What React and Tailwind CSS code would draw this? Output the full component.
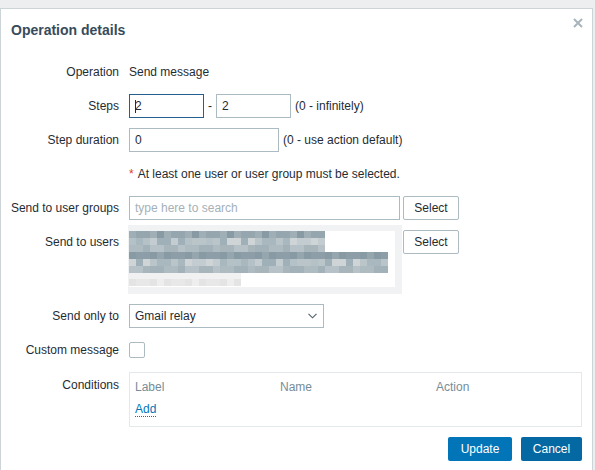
import React from "react";

const DARK = ["bg-[#8d9ea8]", "bg-[#96a6af]", "bg-[#889aa4]", "bg-[#a0aeb6]", "bg-[#92a2ab]"];
const MID = ["bg-[#b4c1c7]", "bg-[#c3ccd0]", "bg-[#a9b7be]", "bg-[#cfd5d6]", "bg-[#bac5ca]", "bg-[#9fb0b8]"];
const SOFT = ["bg-[#a8b6bc]", "bg-[#aebbc1]", "bg-[#b6c2c7]", "bg-[#a3b2b9]"];
const LIGHT = ["bg-[#eeeeee]", "bg-[#e4e4e4]", "bg-[#f3f3f3]", "bg-[#dcdbdb]", "bg-[#e8e8e8]"];

// blurred user list, drawn as a mosaic
const MosaicRow = ({ cells, palette, seed }) => (
  <div className="flex h-[7px]">
    {Array.from({ length: cells }).map((_, i) => (
      <div key={i} className={`w-[7px] h-[7px] ${palette[(i * 7 + seed * 3 + ((i * i) % 5)) % palette.length]}`} />
    ))}
  </div>
);

const Row = ({ label, children, className = "items-center h-6", inner = "items-center" }) => (
  <div className={`flex ${className}`}>
    <div className="w-[118px] shrink-0 text-right">{label}</div>
    <div className={`ml-[10px] flex ${inner}`}>{children}</div>
  </div>
);

const Box = ({ w, children, focused }) => (
  <div
    className={`h-6 flex items-center px-[5px] bg-white border ${
      focused ? "border-[#245f8f]" : "border-[#acbbc2]"
    } ${w}`}
  >
    {children}
  </div>
);

const SelectBtn = ({ className = "" }) => (
  <div className={`h-6 w-[56px] flex items-center justify-center border border-[#acbbc2] rounded-[2px] bg-white text-[#1f2c33] ${className}`}>
    Select
  </div>
);

export default function App() {
  return (
    <div className="w-[595px] h-[470px] overflow-hidden bg-[#eceeef] pt-2 font-['Liberation_Sans',Arial,sans-serif] text-[12px] text-[#1f2c33]">
      <div className="relative w-[593px] h-[480px] bg-white border border-[#cdd4d8]">
        {/* close */}
        <svg className="absolute right-[9px] top-[9px]" width="10" height="10" viewBox="0 0 10 10">
          <path d="M1 1L9 9M9 1L1 9" stroke="#a9b4bb" strokeWidth="2" />
        </svg>

        <div className="pl-[10px] mt-[12px] h-[18px] leading-[18px] text-[14px] font-bold text-[#384b5b]">
          Operation details
        </div>

        <div className="mt-[21px] flex flex-col gap-[10px] leading-[14px]">
          <Row label="Operation">Send message</Row>

          <Row label="Steps">
            <Box w="w-[75px]" focused>
              <span className="w-px h-[13px] bg-[#1f2c33] -mr-px" />
              2
            </Box>
            <span className="mx-[4px]">-</span>
            <Box w="w-[75px]">2</Box>
            <span className="ml-[4px]">(0 - infinitely)</span>
          </Row>

          <Row label="Step duration">
            <Box w="w-[150px]">0</Box>
            <span className="ml-[4px]">(0 - use action default)</span>
          </Row>

          <Row label="">
            <span className="text-[#e33734] mr-[4px]">*</span>
            At least one user or user group must be selected.
          </Row>

          <Row label="Send to user groups">
            <Box w="w-[271px]">
              <span className="text-[#a4b1b8]">type here to search</span>
            </Box>
            <SelectBtn className="ml-[3px]" />
          </Row>

          <Row
            label={<div className="pt-[5px]">Send to users</div>}
            className="items-start h-[64px]"
            inner="items-start"
          >
            <div className="-mt-[5px] -ml-px w-[274px] h-[69px] bg-[#f0f2f3] pt-[6px] pl-px">
              <div className="w-[266px] h-[56px] bg-white">
                <div className="flex flex-col">
                  <MosaicRow cells={28} palette={DARK} seed={1} />
                  <MosaicRow cells={28} palette={MID} seed={2} />
                  <MosaicRow cells={28} palette={SOFT} seed={3} />
                </div>
                <div className="flex flex-col">
                  <MosaicRow cells={37} palette={DARK} seed={4} />
                  <MosaicRow cells={37} palette={MID} seed={5} />
                  <MosaicRow cells={37} palette={SOFT} seed={6} />
                </div>
                <div className="flex flex-col">
                  <div className="h-[6px] w-[112px] bg-[#f1f1f1]" />
                  <MosaicRow cells={16} palette={LIGHT} seed={7} />
                </div>
              </div>
            </div>
            <SelectBtn className="ml-[1px]" />
          </Row>

          <Row label="Send only to">
            <div className="h-6 w-[195px] flex items-center justify-between px-[5px] border border-[#acbbc2] bg-white">
              <span>Gmail relay</span>
              <svg width="9" height="6" viewBox="0 0 9 6" className="mr-[1px]">
                <path d="M0.5 0.8L4.5 4.8L8.5 0.8" stroke="#4f5f6a" strokeWidth="1.1" fill="none" />
              </svg>
            </div>
          </Row>

          <Row label="Custom message">
            <div className="w-[16px] h-[16px] border border-[#acbbc2] rounded-[2px] bg-white" />
          </Row>

          <Row label={<div className="pt-[6px]">Conditions</div>} className="items-start" inner="items-start">
            <div className="w-[453px] h-[55px] border border-[#e3e8eb] px-[5px] pt-[7px]">
              <div className="flex text-[#768d99] h-[14px]">
                <div className="w-[145px]">Label</div>
                <div className="w-[156px]">Name</div>
                <div>Action</div>
              </div>
              <div className="mt-[8px]">
                <span className="text-[#0275b8] border-b border-dotted border-[#0275b8]">Add</span>
              </div>
            </div>
          </Row>

          <div className="flex justify-end gap-[9px] pr-[10px]">
            <div className="h-6 w-[64px] flex items-center justify-center rounded-[2px] bg-[#0275b8] text-white">
              Update
            </div>
            <div className="h-6 w-[61px] flex items-center justify-center rounded-[2px] bg-[#0468a2] text-white">
              Cancel
            </div>
          </div>
        </div>
      </div>
    </div>
  );
}
